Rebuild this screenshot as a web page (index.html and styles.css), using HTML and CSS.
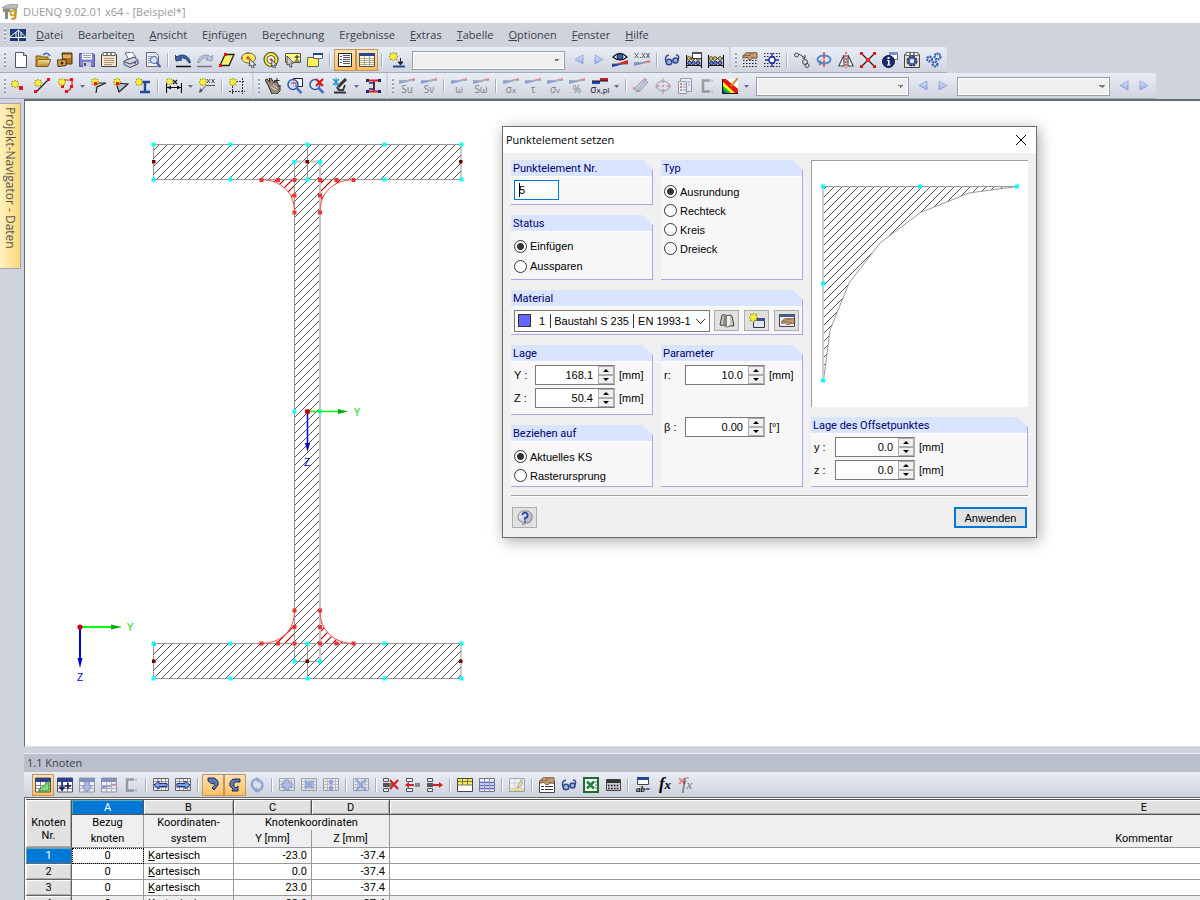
FILE: index.html
```html
<!DOCTYPE html>
<html lang="de">
<head>
<meta charset="utf-8">
<title>DUENQ 9.02.01 x64 - [Beispiel*]</title>
<link rel="stylesheet" href="styles.css">
</head>
<body>
<svg class="defs" aria-hidden="true">
<defs>
<linearGradient id="g-steel" x1="0" y1="0" x2="1" y2="1"><stop offset="0" stop-color="#fff"/><stop offset="1" stop-color="#9aa3b5"/></linearGradient>
<linearGradient id="g-fold" x1="0" y1="0" x2="0" y2="1"><stop offset="0" stop-color="#f8e49a"/><stop offset="1" stop-color="#b58a24"/></linearGradient>
<linearGradient id="g-blue" x1="0" y1="0" x2="0" y2="1"><stop offset="0" stop-color="#dfe8ff"/><stop offset="1" stop-color="#8fabec"/></linearGradient>
<pattern id="hatch" width="8" height="8" patternUnits="userSpaceOnUse"><path d="M-1 9L9-1M-1 1L1-1M7 9L9 7" stroke="#222" stroke-width=".8"/></pattern>
<pattern id="hatch-red" width="8" height="8" patternUnits="userSpaceOnUse"><path d="M-1 9L9-1M-1 1L1-1M7 9L9 7" stroke="#a00" stroke-width="1.200"/></pattern>
<symbol id="star" viewBox="0 0 8 8"><path d="M4 0v8M0 4h8M1 1l6 6M7 1L1 7" stroke="#a89a00" stroke-width="1.4"/><path d="M4 1v6M1 4h6M2 2l4 4M6 2L2 6" stroke="#fff23a" stroke-width="1.3"/></symbol>
<symbol id="wedge" viewBox="0 0 16 6"><path d="M4 3L16 0v3z" fill="#d33"/><path d="M0 3H12L0 6z" fill="#3b5fc8"/><path d="M0 2.500H16" stroke="#777"/></symbol>
<symbol id="hand" viewBox="0 0 16 9"><path d="M0 4L5 0h6l5 1v6l-5 0-2 2-3-1-1-2-5 1z" fill="#c99f72" stroke="#503a28" stroke-width=".8"/><path d="M1 4h8M6 2h6M9 6h4" stroke="#6b4a30" stroke-width=".7"/></symbol>
<symbol id="grid" viewBox="0 0 16 16"><path d="M.5 1h15v14H.5z" fill="#fff" stroke="#555"/><path d="M0 1h16v4H0z" fill="#2b3f8c"/><path d="M1 8.500h14M1 11.500h14M5.500 5v10M10.500 5v10" stroke="#889"/></symbol>
<symbol id="grid-plain" viewBox="0 0 16 16"><path d="M.5 1.500h15v12H.5z" fill="#eee" stroke="#666"/><path d="M1 4.500h14M1 7.500h14M1 10.500h14M4.500 2v11M8.500 2v11M12.500 2v11" stroke="#888" stroke-width=".8"/></symbol>

<symbol id="app" viewBox="0 0 16 16"><path d="M0 4L5 1l10-1 1 3-3 2H7z" fill="#bbb" stroke="#777" stroke-width=".6"/><path d="M1 5h7v3H6v7H3V8H1z" fill="#888"/><path d="M12 5l3-1v5l-3 1z" fill="#999"/><circle cx="11" cy="9" r="2.500" fill="none" stroke="#d8a62c" stroke-width="2"/><path d="M13.500 8v5q0 2-4 2" fill="none" stroke="#c79420" stroke-width="2"/></symbol>
<symbol id="bridge" viewBox="0 0 16 12"><path d="M0 0h16v12H0z" fill="#1c3a78"/><path d="M0 8.500h16M8.500 1v11M8.500 1L0 8M8.500 1l7 7M6 3v5M11 3v5" stroke="#fff" fill="none"/></symbol>
<symbol id="new" viewBox="0 0 16 16"><path d="M2.500.5h8l3 3v12h-11z" fill="#fff" stroke="#555"/><path d="M10.500.5v3h3" fill="#ddd" stroke="#555"/></symbol>
<symbol id="open" viewBox="0 0 16 16"><path d="M1 4h5l1 1h6v9H1z" fill="#c9a13a" stroke="#806010"/><path d="M3 7.500h13l-3 7H1z" fill="url(#g-fold)" stroke="#806010"/><path d="M8 3q4-4 7 1" fill="none" stroke="#3d6fb8" stroke-width="1.600"/></symbol>
<symbol id="archive" viewBox="0 0 16 16"><path d="M5 1h10v11h-9z" fill="#a8732d" stroke="#4c300d"/><path d="M6 3h8v3H6z" fill="#e2b060"/><path d="M.5 8L9 7.500v6L1 14.500z" fill="#e0a34a" stroke="#4c300d"/><circle cx="5" cy="11" r="1.500" fill="#402808"/></symbol>
<symbol id="save" viewBox="0 0 16 16"><path d="M.5 1.500h13l2 1v12H.5z" fill="#7f7fd0" stroke="#54549a"/><path d="M3 1.500h10v6H3z" fill="#fff"/><path d="M4 3.500h8M4 5.500h8" stroke="#99a"/><path d="M4 10h8v5H4z" fill="#ccd"/><path d="M5 11h2v3H5z" fill="#447"/></symbol>
<symbol id="clip" viewBox="0 0 16 16"><path d="M.5 2.500h15v12H.5z" fill="#f6e3c4" stroke="#444"/><path d="M2 .5h4v3H2zM6 .5h4v3H6zM10 .5h4v3h-4z" fill="#fff" stroke="#666"/><path d="M3 6.500h10M3 8.500h10M3 10.500h10M3 12.500h8" stroke="#a98"/></symbol>
<symbol id="print" viewBox="0 0 16 16"><path d="M2 1l7-1 4 5-7 3z" fill="#fff" stroke="#667"/><path d="M1 9l10-4 4 3v4l-8 3.500-6-3z" fill="#ccd1e4" stroke="#445"/><path d="M2 10l5 2 7-3" stroke="#445" fill="none"/><circle cx="12" cy="11" r="1" fill="#3a59b0"/></symbol>
<symbol id="preview" viewBox="0 0 16 16"><path d="M1.500 .5h9l3 3v11h-12z" fill="#eee" stroke="#667"/><path d="M3 4.500h8M3 6.500h4M3 8.500h3M3 10.500h3" stroke="#99a"/><circle cx="9" cy="8" r="3.500" fill="#cfe2fb" stroke="#4a70b8"/><path d="M11.500 10.500l4 4.500" stroke="#3d5fae" stroke-width="2"/></symbol>
<symbol id="undo" viewBox="0 0 16 16"><path d="M0 3l1 6 6-1-2-2q6-1 9 5 2 0 1-2-2-6-8-6-3 0-5 2z" fill="#3762a8" stroke="#142a55" stroke-width=".8"/><path d="M1 14.500h15" stroke="#112" stroke-width="1.500"/></symbol>
<symbol id="redo" viewBox="0 0 16 16"><path d="M16 3l-1 6-6-1 2-2Q5 5 2 11 0 11 1 9 3 3 9 3q3 0 5 2z" fill="#b7c7e0" stroke="#7b8eab" stroke-width=".8"/><path d="M0 14.500h15" stroke="#778" stroke-width="1.500"/></symbol>
<symbol id="para" viewBox="0 0 16 16"><path d="M6 2.500h9L10 13.500H1z" fill="#ffef6a" stroke="#222" stroke-width="1.300"/><path d="M5 1h3v3H5zM0 12h3v3H0z" fill="#e11"/></symbol>
<symbol id="ellsel" viewBox="0 0 16 16"><ellipse cx="7.500" cy="6" rx="7" ry="5" fill="#fff05e" stroke="#665"/><path d="M7 4v4M5 6h4M0 6h2M7 0v2" stroke="#e11"/><path d="M9 7l6 6-3 0 1 3-2 0-1-3-2 1z" fill="#ddd" stroke="#333" stroke-width=".8"/></symbol>
<symbol id="circsel" viewBox="0 0 16 16"><circle cx="8" cy="7.500" r="7" fill="#ffef30" stroke="#554" stroke-width="1.200"/><circle cx="8" cy="7.500" r="4" fill="#fff" stroke="#554"/><path d="M8 6v3M6.500 7.500h3" stroke="#e11"/><path d="M9 8l5 5-2.500 0 1 3-2 0-1-3-1 1z" fill="#ddd" stroke="#333" stroke-width=".8"/></symbol>
<symbol id="rectsel" viewBox="0 0 16 16"><path d="M.5 1.500h15v9H.5z" fill="#fff68a" stroke="#555"/><path d="M12 3v5M9.500 5h5M9.500 9h5" stroke="#222"/><path d="M2 4l7 7-3 0 1 4-2 0-1-3-2 1z" fill="#ccc" stroke="#333" stroke-width=".8"/></symbol>
<symbol id="winsel" viewBox="0 0 16 16"><path d="M.5 5.500h11v9H.5z" fill="#fff05e" stroke="#665"/><path d="M6.500 1.500h9v5h-9z" fill="#fff" stroke="#667"/><path d="M6 1h10v2H6z" fill="#23408f"/></symbol>
<symbol id="panel1" viewBox="0 0 16 16"><path d="M1.500 1.500h13v13h-13z" fill="#fff" stroke="#222"/><path d="M3 4.500h2M3 7.500h2M3 10.500h2M6 3.500h7M6 5.500h7M6 7.500h7M6 9.500h7M6 11.500h7" stroke="#556"/></symbol>
<symbol id="panel2" viewBox="0 0 16 16"><path d="M.5 1.500h15v13H.5z" fill="#fffbe0" stroke="#555"/><path d="M0 1h16v3H0z" fill="#2a4493"/><path d="M1 6.500h14M1 8.500h14M1 10.500h14M1 12.500h14M5.500 4v10M10.500 4v10" stroke="#998" stroke-width=".8"/></symbol>
<symbol id="starload" viewBox="0 0 16 16"><use href="#star" width="9" height="9"/><path d="M11.500 6v6M9 10l2.500 3 2.500-3z" stroke="#223" fill="#223"/><path d="M4 14.500h12" stroke="#27468f" stroke-width="2"/></symbol>
<symbol id="left" viewBox="0 0 16 16"><path d="M12 3v9L4 7.500z" fill="url(#g-blue)" stroke="#7f92cc" stroke-width=".7"/></symbol>
<symbol id="right" viewBox="0 0 16 16"><path d="M4 3v9l8-4.500z" fill="url(#g-blue)" stroke="#7f92cc" stroke-width=".7"/></symbol>
<symbol id="eye" viewBox="0 0 16 16"><path d="M4 12l12-4v4z" fill="#d22"/><path d="M0 12h12L0 15z" fill="#1c2fb8"/><path d="M0 12h16" stroke="#666" stroke-width=".8"/><path d="M1 5q7-7 14 0-7 6-14 0z" fill="#fff" stroke="#111" stroke-width="1.200"/><circle cx="8" cy="4.500" r="3" fill="#2d5ec9" stroke="#111"/></symbol>
<symbol id="xxx" viewBox="0 0 16 16"><path d="M.5 1l4 5M4.500 1l-4 5M8 1l3 5M11 1L8 6M12.500 1l3 5M15.500 1l-3 5" stroke="#555" stroke-width=".9"/><path d="M6 5h1v1H6z" fill="#555"/><g opacity=".6"><use href="#wedge" y="8" width="16" height="6"/></g></symbol>
<symbol id="glasses" viewBox="0 0 16 16"><circle cx="5" cy="10" r="2.800" fill="#9db4e6" stroke="#35488a" stroke-width="1.500"/><circle cx="11.500" cy="8.500" r="2.500" fill="#9db4e6" stroke="#35488a" stroke-width="1.500"/><path d="M2 10Q0 4 5 3M14 8q2-5-2-5" stroke="#35488a" fill="none" stroke-width="1.500"/></symbol>
<symbol id="abacus" viewBox="0 0 16 16"><path d="M.5 3v13M15.500 3v13M0 6.500h16M0 13.500h16" stroke="#111" stroke-width="1.200"/><circle cx="3" cy="6.500" r="1.800" fill="#e8cb4a" stroke="#554"/><circle cx="7" cy="6.500" r="1.800" fill="#e8cb4a" stroke="#554"/><circle cx="12" cy="6.500" r="1.800" fill="#e8cb4a" stroke="#554"/><circle cx="3.500" cy="11" r="1.800" fill="#678be0" stroke="#225"/><circle cx="7.500" cy="11" r="1.800" fill="#678be0" stroke="#225"/><circle cx="12" cy="11" r="1.800" fill="#678be0" stroke="#225"/></symbol>
<symbol id="abacuswin" viewBox="0 0 16 16"><use href="#abacus" width="16" height="16"/><path d="M6.500 .5h9v6h-9z" fill="#fff" stroke="#333"/><path d="M6 0h10v2H6z" fill="#456"/></symbol>
<symbol id="handgrid" viewBox="0 0 16 16"><path d="M1 5.500h15M1 8.500h15M1 11.500h15M1 14.500h15" stroke="#223" stroke-dasharray="1.500 1.500"/><use href="#hand" width="16" height="8"/></symbol>
<symbol id="target" viewBox="0 0 16 16"><path d="M0 1.500h16M0 4.500h16M0 11.500h16M0 14.500h16" stroke="#223" stroke-dasharray="1.500 1.500"/><path d="M8 1v14M1 8h14" stroke="#2437a0" stroke-width="1.500"/><circle cx="8" cy="8" r="3" fill="#fff" stroke="#2437a0" stroke-width="1.500"/></symbol>
<symbol id="chain" viewBox="0 0 16 16"><circle cx="2.500" cy="3" r="2" fill="none" stroke="#444"/><circle cx="13" cy="13.500" r="2" fill="none" stroke="#444"/><circle cx="11" cy="10" r="2.500" fill="none" stroke="#444"/><path d="M5 2l6 4M11 6V3M11 6H8" stroke="#444" fill="none"/></symbol>
<symbol id="rotate" viewBox="0 0 16 16"><ellipse cx="8" cy="7.500" rx="6.500" ry="4" fill="none" stroke="#5b8acb" stroke-width="2"/><path d="M4 8l3 3-4 3z" fill="#4f7fc4"/><path d="M8 0v16" stroke="#e11" stroke-width="1.200" stroke-dasharray="3 1"/></symbol>
<symbol id="mirror" viewBox="0 0 16 16"><path d="M6 3v11H.8zM10 3v11h5.200z" fill="#eef" stroke="#444" stroke-width="1.100"/><path d="M8 0v16" stroke="#e11" stroke-width="1.200" stroke-dasharray="2 1"/></symbol>
<symbol id="xnodes" viewBox="0 0 16 16"><path d="M1 1l14 14M15 1L1 15" stroke="#222" stroke-width="1.300"/><path d="M0 0h3v3H0zM13 0h3v3h-3zM0 13h3v3H0zM13 13h3v3h-3zM6 6h4v4H6z" fill="#e11"/><path d="M7.500 7.500h1v1h-1z" fill="#fff"/></symbol>
<symbol id="info" viewBox="0 0 16 16"><path d="M7.500 .5h8v7h-8z" fill="#fff" stroke="#667"/><path d="M7 0h9v3H7z" fill="#7d8fc6"/><circle cx="6.500" cy="9.500" r="6" fill="#1d2a73" stroke="#0d1440"/><path d="M5.500 5h2v2h-2zM5 8h2.500v4.500H8.500v1H5v-1h1V9H5z" fill="#fff"/></symbol>
<symbol id="gear" viewBox="0 0 16 16"><path d="M.5 2.500h15v13H.5z" fill="#f3dfc0" stroke="#444"/><path d="M2 .5h4v3H2zM6 .5h4v3H6zM10 .5h4v3h-4z" fill="#fff" stroke="#666"/><circle cx="8" cy="9" r="4" fill="none" stroke="#1d397e" stroke-width="3" stroke-dasharray="2.500 .6"/><circle cx="8" cy="9" r="3" fill="#dfe8fa" stroke="#36589e" stroke-width="1.500"/></symbol>
<symbol id="gears" viewBox="0 0 16 16"><g fill="#eaf0ff" stroke="#3e63b4" stroke-width="2.400" stroke-dasharray="1.800 .6"><circle cx="3.500" cy="7" r="2.300"/><circle cx="11.500" cy="4.500" r="2.800"/><circle cx="9" cy="12" r="2.300"/></g></symbol>

<symbol id="node" viewBox="0 0 16 16"><use href="#star" x="1" y="2" width="8" height="8"/><path d="M9 8h4v4H9z" fill="#e11"/></symbol>
<symbol id="line" viewBox="0 0 16 16"><path d="M2 14L14 2" stroke="#222" stroke-width="1.200"/><path d="M0 12h3v3H0zM13 0h3v3h-3z" fill="#e11"/><use href="#star" y="1" width="8" height="8"/></symbol>
<symbol id="poly" viewBox="0 0 16 16"><path d="M6 2h8v6q-2 5-7 6" stroke="#d22" stroke-width="1.200" fill="none"/><path d="M12 0h3v3h-3zM12 7h3v3h-3zM7 12h3v3H7zM3 7h3v3H3z" fill="#e11"/><use href="#star" y="0" width="8" height="8"/></symbol>
<symbol id="seg1" viewBox="0 0 16 16"><path d="M3 5l12 0-9 4-1 6" stroke="#222" fill="#ccd" stroke-width="1.200"/><use href="#star" width="8" height="8"/><path d="M3 4h3v3H3z" fill="#e11"/></symbol>
<symbol id="seg2" viewBox="0 0 16 16"><path d="M3 5l12 1-9 8z" stroke="#222" fill="#bbc" stroke-width="1.200"/><use href="#star" width="8" height="8"/><path d="M3 4h3v3H3z" fill="#e11"/></symbol>
<symbol id="ibeam" viewBox="0 0 16 16"><path d="M5 4h10M5 14h10M10 4v10" stroke="#24479a" stroke-width="2.400"/><use href="#star" width="8" height="8"/></symbol>
<symbol id="dim" viewBox="0 0 16 16"><path d="M.5 5v10M15.500 5v10M1 9.500h14" stroke="#111" stroke-width="1.200"/><path d="M1 9.500l4-2v4zM15 9.500l-4-2v4z" fill="#111"/><path d="M7 2l4 4M11 2L7 6" stroke="#222" stroke-width="1.400"/><use href="#star" width="7" height="7"/></symbol>
<symbol id="note" viewBox="0 0 16 16"><path d="M1 14L7 7.500h9" stroke="#555" fill="none"/><path d="M0 15l1-5 3 3z" fill="#555"/><path d="M8 1l3 4M11 1L8 5M12.500 1l3 4M15.500 1l-3 4" stroke="#555"/><use href="#star" width="8" height="8"/></symbol>
<symbol id="frame" viewBox="0 0 16 16"><path d="M4 3.500h12M0 13.500h16M3.500 2v14M13.500 0v16" stroke="#333" stroke-dasharray="2 1"/><use href="#star" width="8" height="8"/></symbol>
<symbol id="grab" viewBox="0 0 16 16"><path d="M3 7L0 2l2-1 3 3-1-4 2 0 3 5 1-3 3 4 2 3v4l-3 3H7z" fill="#9a8778" stroke="#332a24"/><path d="M12 0v5M9.500 2.500h5M13 8h3" stroke="#222"/><path d="M6 9l5 3M8 7l4 3" stroke="#ddd"/></symbol>
<symbol id="zoomwin" viewBox="0 0 16 16"><path d="M6.500 .5h9v8h-9z" fill="#fff" stroke="#223"/><circle cx="6" cy="6.500" r="5" fill="#cfe2fb" fill-opacity=".8" stroke="#3356a6" stroke-width="1.500"/><path d="M9.500 10l5 5" stroke="#4672c8" stroke-width="2.500"/><path d="M4 5h5v4" stroke="#a33" fill="none"/></symbol>
<symbol id="zoomx" viewBox="0 0 16 16"><circle cx="6" cy="6.500" r="5" fill="#dce9fb" stroke="#3356a6" stroke-width="1.500"/><path d="M9.500 10l5 5" stroke="#4672c8" stroke-width="2.500"/><path d="M7 1l7 7M14 1L7 8" stroke="#d11" stroke-width="2"/></symbol>
<symbol id="micro" viewBox="0 0 16 16"><path d="M14 1L6 9" stroke="#333" stroke-width="3"/><path d="M2 14.500h12M5 9q1 4 6 3l2-5" stroke="#333" stroke-width="1.800" fill="none"/><path d="M1 1l6 6M7 1L1 7M4 0v8" stroke="#2691d8" stroke-width="1.300"/></symbol>
<symbol id="beamred" viewBox="0 0 16 16"><path d="M3 2.500h10M3 13.500h10M9 3v10" stroke="#d22" stroke-width="2"/><path d="M4 5h5v6H4" stroke="#1b2a70" stroke-width="1.500" fill="none"/><path d="M1 1h3v3H1zM13 1h3v3h-3zM1 12h3v3H1zM13 12h3v3h-3z" fill="#1b2a70"/></symbol>
<symbol id="hatching" viewBox="0 0 16 16"><path d="M1 11L10 2l5 2-9 10z" fill="#a9c2e0" stroke="#557"/><path d="M3 14L14 1M1 11l6 2" stroke="#668" fill="none"/><path d="M10 0h3v3h-3zM0 9h3v3H0z" fill="#d55"/></symbol>
<symbol id="ellcross" viewBox="0 0 16 16"><ellipse cx="8" cy="8" rx="6.500" ry="5" fill="none" stroke="#446"/><path d="M8 0v5M8 11v5M0 8h5M11 8h5M8 7v2M7 8h2" stroke="#c33"/></symbol>
<symbol id="report" viewBox="0 0 16 16"><path d="M3.500 .5h11v13h-11z" fill="#eef" stroke="#556"/><path d="M1.500 3.500h8v12h-8z" fill="#fff" stroke="#556"/><path d="M3 6h2M3 9h2" stroke="#c33" stroke-width="2"/><path d="M3 12h2" stroke="#393" stroke-width="2"/><path d="M6 6h3M6 9h3M6 12h3M11 4h2M11 7h2" stroke="#557"/></symbol>
<symbol id="chan" viewBox="0 0 16 16"><path d="M11 2.500H4v11h7" fill="none" stroke="#555" stroke-width="2.400"/><path d="M12 1.500h2v2h-2zM12 12.500h2v2h-2z" fill="#a88"/></symbol>
<symbol id="rainbow" viewBox="0 0 16 16"><path d="M0 1h16v14H0z" fill="#fff"/><path d="M0 1h4l12 10v4H0z" fill="#e11"/><path d="M0 3l13 12H0z" fill="#ff0"/><path d="M0 7l9 8H0z" fill="#1b3"/><path d="M0 11l5 4H0z" fill="#14d"/><path d="M16 0L9 8" stroke="#c9952c" stroke-width="2"/><path d="M.5 1v14.500H16" stroke="#111" fill="none"/></symbol>
<symbol id="sxpl" viewBox="0 0 16 6"><path d="M8 0h8v3H8z" fill="#b22"/><path d="M0 3h8v3H0z" fill="#2346b0"/><path d="M0 3h16" stroke="#111"/></symbol>
<symbol id="caret" viewBox="0 0 8 8"><path d="M2 3h5L4.500 6z" fill="#6a6f7a"/></symbol>

<symbol id="t-edit" viewBox="0 0 16 16"><use href="#grid" width="16" height="16"/><path d="M3 14L14 4v10z" fill="#7ed978" stroke="#2a8d28"/></symbol>
<symbol id="t-ins" viewBox="0 0 16 16"><use href="#grid" width="16" height="16"/><path d="M5 5v7M2.500 9.500L5 13l2.500-3.500M11 6v6M8 9h6" stroke="#14255e" stroke-width="1.600" fill="none"/></symbol>
<symbol id="t-down" viewBox="0 0 16 16"><use href="#grid" width="16" height="16"/><path d="M6 5h4v4h3l-5 6-5-6h3z" fill="#7d99e0" stroke="#3455a8"/></symbol>
<symbol id="t-wedge" viewBox="0 0 16 16"><use href="#grid" width="16" height="16"/><use href="#wedge" y="6" width="16" height="6"/></symbol>
<symbol id="t-left" viewBox="0 0 16 16"><use href="#grid-plain" width="16" height="16"/><path d="M1 8l5-4v2.500h8v3H6V12z" fill="#7f9eea" stroke="#1d3580"/></symbol>
<symbol id="t-right" viewBox="0 0 16 16"><use href="#grid-plain" width="16" height="16"/><path d="M15 8l-5-4v2.500H2v3h8V12z" fill="#7f9eea" stroke="#1d3580"/></symbol>
<symbol id="t-hook1" viewBox="0 0 16 16"><path d="M3 1h6q5 2 4 7l-4 5-2-2q4-3 2-5L7 7 3 4z" fill="#5978b8" stroke="#222b48"/></symbol>
<symbol id="t-hook2" viewBox="0 0 16 16"><path d="M13 2H7Q2 3 3 9l3 3-1 2h6l0-5-2 2q-4-3-1-6h5z" fill="#5978b8" stroke="#222b48"/></symbol>
<symbol id="t-sync" viewBox="0 0 16 16"><path d="M8 2q-6 1-5 7l3 4M8 14q7-2 5-8L10 3" stroke="#4e6eb8" stroke-width="2.500" fill="none"/><path d="M7 0l4 2-3 4zM9 16l-4-2 3-4z" fill="#4e6eb8"/></symbol>
<symbol id="t-plus" viewBox="0 0 16 16"><use href="#grid-plain" width="16" height="16"/><path d="M6 3h4v3h3v4h-3v3H6v-3H3V6h3z" fill="#7f9eea" stroke="#3452ab"/></symbol>
<symbol id="t-mul" viewBox="0 0 16 16"><use href="#grid-plain" width="16" height="16"/><path d="M4 4l8 7M12 4l-8 7" stroke="#4f70d5" stroke-width="3.500"/></symbol>
<symbol id="t-div" viewBox="0 0 16 16"><use href="#grid-plain" width="16" height="16"/><circle cx="8" cy="5" r="2.200" fill="#3f60c5"/><circle cx="8" cy="11" r="2.200" fill="#3f60c5"/></symbol>
<symbol id="t-x" viewBox="0 0 16 16"><use href="#grid-plain" width="16" height="16"/><path d="M3 2l10 12M13 2L3 14" stroke="#456bd0" stroke-width="2.200"/></symbol>
<symbol id="rows" viewBox="0 0 6 16"><path d="M.5 1.500h5v3h-5zM.5 11.500h5v3h-5z" fill="#eee" stroke="#555"/><path d="M0 6h6v4H0z" fill="#555"/></symbol>
<symbol id="r-del" viewBox="0 0 16 16"><use href="#rows" width="6" height="16"/><path d="M6 6h4v4H6z" fill="#777"/><path d="M7 3l8 9M15 3L7 12" stroke="#c22" stroke-width="2"/></symbol>
<symbol id="r-left" viewBox="0 0 16 16"><path d="M1.500 1.500h6v3h-6zM1.500 11.500h6v3h-6z" fill="#eee" stroke="#555"/><path d="M10 6h5v4h-5z" fill="#888"/><path d="M0 8l4-3v2h5v2H4v2z" fill="#c22"/></symbol>
<symbol id="r-right" viewBox="0 0 16 16"><use href="#rows" width="6" height="16"/><path d="M16 8l-4-3v2H6v2h6v2z" fill="#c22"/></symbol>
<symbol id="g-yel" viewBox="0 0 16 16"><path d="M.5 1.500h15v13H.5z" fill="#fff" stroke="#444"/><path d="M1 2h14v6H1z" fill="#f2ec55"/><path d="M1 4.500h14M1 8h14M5.500 2v6M10.500 2v6" stroke="#775"/></symbol>
<symbol id="g-lines" viewBox="0 0 16 16"><path d="M.5 1.500h15v13H.5z" fill="#eef" stroke="#778"/><path d="M1 5.500h14M1 8.500h14M1 11.500h14" stroke="#5b68c8" stroke-width="1.600"/><path d="M5.500 2v12M10.500 2v12" stroke="#99a"/></symbol>
<symbol id="g-paint" viewBox="0 0 16 16"><path d="M.5 1.500h15v13H.5z" fill="#fff" stroke="#667"/><path d="M1 11h14v3H1z" fill="#f3e34c"/><path d="M1 6h14M6 2v12" stroke="#bbb"/><path d="M13 1v6q-1 4-5 4l2-4z" fill="#f0e050" stroke="#776"/></symbol>
<symbol id="handlist" viewBox="0 0 16 16"><path d="M.5 4.500h15v11H.5z" fill="#fff" stroke="#444"/><path d="M2 9.500h3M2 12.500h3M6 9.500h8M6 12.500h8" stroke="#333"/><use href="#hand" width="16" height="8"/></symbol>
<symbol id="excel" viewBox="0 0 16 16"><path d="M1 1h14v14H1z" fill="#fff" stroke="#1f6b2d" stroke-width="2"/><path d="M4 4.500l7 7M11 4.500l-7 7" stroke="#24803a" stroke-width="2.600"/><path d="M12 5h2M12 8h2M12 11h2" stroke="#24803a"/></symbol>
<symbol id="calc" viewBox="0 0 16 16"><path d="M1.500 2.500h14v11h-14z" fill="#ccc" stroke="#444"/><path d="M2 3h13v3H2z" fill="#333"/><path d="M3 8.500h11M3 11.500h11" stroke="#223" stroke-width="1.600" stroke-dasharray="1.700 1.200"/></symbol>
<symbol id="miniwin" viewBox="0 0 12 8"><path d="M.5 .5h11v7H.5z" fill="#fff" stroke="#444"/><path d="M0 0h12v3H0z" fill="#24469c"/></symbol>
<symbol id="redx" viewBox="0 0 8 8"><path d="M1 1l6 6M7 1L1 7" stroke="#d33" stroke-width="2"/></symbol>
<symbol id="book" viewBox="0 0 16 16"><path d="M1 12L3 2q3-1 5 1 2-2 5 0l2 10q-4-1-7 1-3-2-7-2z" fill="#c9c7be" stroke="#444"/><path d="M8 3v11l-4-2L5 3z" fill="#8a887c"/><path d="M8 3l3 0v9l-3 2z" fill="#f2f1ea"/></symbol>
<symbol id="newmat" viewBox="0 0 16 16"><path d="M4.500 5.500h11v9h-11z" fill="#dfe4f2" stroke="#334"/><path d="M4 5h12v3H4z" fill="#3c5288"/><use href="#star" y="0" width="9" height="9"/></symbol>
<symbol id="editmat" viewBox="0 0 16 16"><path d="M.5 1.500h15v12H.5z" fill="#eee" stroke="#445"/><path d="M0 1h16v3H0z" fill="#4a5a80"/><use href="#hand" x="2" y="5" width="14" height="7"/></symbol>
<symbol id="help" viewBox="0 0 18 18"><path d="M9 1q8 0 8 7t-8 7l-2 2-1-3Q1 12 1 8 2 1 9 1z" fill="url(#g-steel)" stroke="#777"/><path d="M6 6q0-3 3-3t3 3-3 3v2" fill="none" stroke="#24469c" stroke-width="2"/><path d="M8 12h2v2H8z" fill="#24469c"/></symbol>
</defs>
</svg>

<div class="app">
  <header class="titlebar"><svg class="ic"><use href="#app"/></svg><span>DUENQ 9.02.01 x64 - [Beispiel*]</span></header>
  <nav class="menubar">
    <i class="grip"></i><svg class="ic bridge"><use href="#bridge"/></svg>
    <a href="#"><u>D</u>atei</a><a href="#">Bearbeite<u>n</u></a><a href="#"><u>A</u>nsicht</a><a href="#">E<u>i</u>nfügen</a><a href="#">Be<u>r</u>echnung</a><a href="#">Er<u>g</u>ebnisse</a><a href="#"><u>E</u>xtras</a><a href="#"><u>T</u>abelle</a><a href="#"><u>O</u>ptionen</a><a href="#"><u>F</u>enster</a><a href="#"><u>H</u>ilfe</a>
  </nav>

  <div class="toolrow">
    <div class="band first"><i class="grip"></i>
      <button class="tb" aria-label="Neu"><svg class="ic"><use href="#new"/></svg></button>
      <button class="tb" aria-label="Öffnen"><svg class="ic"><use href="#open"/></svg></button>
      <button class="tb" aria-label="Projekte"><svg class="ic"><use href="#archive"/></svg></button>
      <button class="tb" aria-label="Speichern"><svg class="ic"><use href="#save"/></svg></button>
      <button class="tb" aria-label="Basisangaben"><svg class="ic"><use href="#clip"/></svg></button>
      <button class="tb" aria-label="Drucken"><svg class="ic"><use href="#print"/></svg></button>
      <button class="tb" aria-label="Druckvorschau"><svg class="ic"><use href="#preview"/></svg></button>
      <i class="sep"></i>
      <button class="tb" aria-label="Rückgängig"><svg class="ic"><use href="#undo"/></svg></button>
      <button class="tb" aria-label="Wiederholen"><svg class="ic"><use href="#redo"/></svg></button>
      <button class="tb" aria-label="Auswahl Rhomboid"><svg class="ic"><use href="#para"/></svg></button>
      <button class="tb" aria-label="Auswahl Ellipse"><svg class="ic"><use href="#ellsel"/></svg></button>
      <button class="tb" aria-label="Auswahl Ring"><svg class="ic"><use href="#circsel"/></svg></button>
      <button class="tb" aria-label="Auswahl Rechteck"><svg class="ic"><use href="#rectsel"/></svg></button>
      <button class="tb" aria-label="Auswahl speziell"><svg class="ic"><use href="#winsel"/></svg></button>
      <i class="sep"></i>
      <button class="tb on" aria-label="Navigator"><svg class="ic"><use href="#panel1"/></svg></button>
      <button class="tb on" aria-label="Tabellen"><svg class="ic"><use href="#panel2"/></svg></button>
      <i class="sep"></i>
      <button class="tb" aria-label="Lastfall"><svg class="ic"><use href="#starload"/></svg></button>
      <select class="combo" aria-label="Lastfall wählen"></select>
      <button class="tb arrow" aria-label="Vorheriger"><svg class="ic"><use href="#left"/></svg></button>
      <button class="tb arrow" aria-label="Nächster"><svg class="ic"><use href="#right"/></svg></button>
      <button class="tb" aria-label="Ergebnisse ein/aus"><svg class="ic"><use href="#eye"/></svg></button>
      <button class="tb" aria-label="Ergebniswerte"><svg class="ic"><use href="#xxx"/></svg></button>
      <i class="sep"></i>
      <button class="tb" aria-label="Ansicht"><svg class="ic"><use href="#glasses"/></svg></button>
      <button class="tb" aria-label="Berechnung"><svg class="ic"><use href="#abacuswin"/></svg></button>
      <button class="tb" aria-label="Alles berechnen"><svg class="ic"><use href="#abacus"/></svg></button>
    </div>
    <div class="band"><i class="grip"></i>
      <button class="tb" aria-label="Raster bearbeiten"><svg class="ic"><use href="#handgrid"/></svg></button>
      <button class="tb" aria-label="Objektfang"><svg class="ic"><use href="#target"/></svg></button>
      <i class="sep"></i>
      <button class="tb" aria-label="Kopieren"><svg class="ic"><use href="#chain"/></svg></button>
      <button class="tb" aria-label="Rotieren"><svg class="ic"><use href="#rotate"/></svg></button>
      <button class="tb" aria-label="Spiegeln"><svg class="ic"><use href="#mirror"/></svg></button>
      <button class="tb" aria-label="Linien verbinden"><svg class="ic"><use href="#xnodes"/></svg></button>
      <button class="tb" aria-label="Info"><svg class="ic"><use href="#info"/></svg></button>
      <button class="tb" aria-label="Einstellungen"><svg class="ic"><use href="#gear"/></svg></button>
      <button class="tb" aria-label="Optionen"><svg class="ic"><use href="#gears"/></svg></button>
    </div>
  </div>

  <div class="toolrow">
    <div class="band tight"><i class="grip"></i>
      <button class="tb wide" aria-label="Knoten"><svg class="ic"><use href="#node"/></svg></button>
      <button class="tb wide" aria-label="Linie"><svg class="ic"><use href="#line"/></svg></button>
      <button class="tb wide" aria-label="Polylinie"><svg class="ic"><use href="#poly"/></svg></button><button class="dd" aria-label="Mehr"><svg><use href="#caret"/></svg></button>
      <button class="tb" aria-label="Element"><svg class="ic"><use href="#seg1"/></svg></button>
      <button class="tb" aria-label="Punktelement"><svg class="ic"><use href="#seg2"/></svg></button>
      <button class="tb" aria-label="Profil"><svg class="ic"><use href="#ibeam"/></svg></button>
      <i class="sep"></i>
      <button class="tb wide" aria-label="Bemaßung"><svg class="ic"><use href="#dim"/></svg></button><button class="dd" aria-label="Mehr"><svg><use href="#caret"/></svg></button>
      <button class="tb" aria-label="Kommentar"><svg class="ic"><use href="#note"/></svg></button>
      <i class="sep"></i>
      <button class="tb" aria-label="Hilfslinien"><svg class="ic"><use href="#frame"/></svg></button>
    </div>
    <div class="band"><i class="grip"></i>
      <button class="tb" aria-label="Verschieben"><svg class="ic"><use href="#grab"/></svg></button>
      <button class="tb" aria-label="Fenster zoomen"><svg class="ic"><use href="#zoomwin"/></svg></button>
      <button class="tb" aria-label="Alles zeigen"><svg class="ic"><use href="#zoomx"/></svg></button>
      <button class="tb wide" aria-label="Ansicht"><svg class="ic"><use href="#micro"/></svg></button><button class="dd" aria-label="Mehr"><svg><use href="#caret"/></svg></button>
      <button class="tb" aria-label="Querschnitt"><svg class="ic"><use href="#beamred"/></svg></button>
    </div>
    <div class="band"><i class="grip"></i>
      <button class="tb off sym"><svg><use href="#wedge"/></svg><span>Su</span></button>
      <button class="tb off sym"><svg><use href="#wedge"/></svg><span>Sv</span></button>
      <i class="sep"></i>
      <button class="tb off sym"><svg><use href="#wedge"/></svg><span>ω</span></button>
      <button class="tb off sym"><svg><use href="#wedge"/></svg><span>Sω</span></button>
      <i class="sep"></i>
      <button class="tb off sym"><svg><use href="#wedge"/></svg><span>σ<small>x</small></span></button>
      <button class="tb off sym"><svg><use href="#wedge"/></svg><span>τ</span></button>
      <button class="tb off sym"><svg><use href="#wedge"/></svg><span>σ<small>v</small></span></button>
      <button class="tb off sym"><svg><use href="#wedge"/></svg><span>%</span></button>
      <button class="tb wide sym"><svg><use href="#sxpl"/></svg><span>σ<small>x,pl</small></span></button><button class="dd" aria-label="Mehr"><svg><use href="#caret"/></svg></button>
      <i class="sep"></i>
      <button class="tb off" aria-label="Schraffur"><svg class="ic"><use href="#hatching"/></svg></button>
      <button class="tb off" aria-label="Kern"><svg class="ic"><use href="#ellcross"/></svg></button>
      <button class="tb off" aria-label="Protokoll"><svg class="ic"><use href="#report"/></svg></button>
      <button class="tb off" aria-label="Profil"><svg class="ic"><use href="#chan"/></svg></button>
      <button class="tb wide" aria-label="Farben"><svg class="ic"><use href="#rainbow"/></svg></button><button class="dd" aria-label="Mehr"><svg><use href="#caret"/></svg></button>
      <select class="combo" aria-label="Spannung"></select>
      <button class="tb arrow" aria-label="Vorheriger"><svg class="ic"><use href="#left"/></svg></button>
      <button class="tb arrow" aria-label="Nächster"><svg class="ic"><use href="#right"/></svg></button>
      <select class="combo" aria-label="Verlauf"></select>
      <button class="tb arrow" aria-label="Vorheriger"><svg class="ic"><use href="#left"/></svg></button>
      <button class="tb arrow" aria-label="Nächster"><svg class="ic"><use href="#right"/></svg></button>
    </div>
  </div>

  <div class="workspace">
    <aside class="rail"><button class="navtab">Projekt-Navigator - Daten</button></aside>
    <div class="content">
      <main class="canvas">
        <svg class="drawing" width="1175" height="645" viewBox="25 101 1175 645" role="img" aria-label="Querschnitt">
          <path d="M153 144.500H461V180H153zM153 643.500H461V678.500H153zM294.500 180H320V643.500H294.500z" fill="url(#hatch)"/>
          <path d="M261 180C281 180 294.500 192 294.500 212.500V180zM353.500 180C334 180 320 192 320 212.500V180zM261 643.500C281 643 294.500 631 294.500 610V643.500zM353.500 643.500C334 643 320 631 320 610V643.500z" fill="url(#hatch-red)"/>
          <g fill="none" stroke="#999"><path d="M153.500 144.500H461V179.500H153.500zM153.500 643.500H461V678.500H153.500zM307.500 144v35M307.500 643v35M294.500 161.500V661.500M294.500 661.500H320"/><path d="M294.500 161.500H320V661.500" stroke="#c4c4c4" stroke-width="2"/></g>
          <path d="M261 179.500C281 180 294.500 192 294.500 212.500M353.500 179.500C334 180 320 192 320 212.500M261 643.500C281 643 294.500 631 294.500 610.500M353.500 643.500C334 643 320 631 320 610.500" fill="none" stroke="#ff4a4a"/>
          <path d="M151.500 142.500h4v4h-4zm77 0h4v4h-4zm77 0h4v4h-4zm77 0h4v4h-4zm77 0h4v4h-4zM151.500 177.500h4v4h-4zm77 0h4v4h-4zm77 0h4v4h-4zm77 0h4v4h-4zm77 0h4v4h-4zM151.500 641.500h4v4h-4zm77 0h4v4h-4zm77 0h4v4h-4zm77 0h4v4h-4zm77 0h4v4h-4zM151.500 676.500h4v4h-4zm77 0h4v4h-4zm77 0h4v4h-4zm77 0h4v4h-4zm77 0h4v4h-4zM292.500 160h4v4h-4zm25.500 0h4v4h-4zM292.500 659.500h4v4h-4zm25.500 0h4v4h-4zM292.500 409.500h4v4h-4zm25.500 0h4v4h-4z" fill="#1ff"/>
          <path d="M259.500 178h4v4h-4zm16.500 0h4v4h-4zm16.500 0h4v4h-4zm25.500 0h4v4h-4zm16.500 0h4v4h-4zm17 0h4v4h-4zM292.500 193.500h4v4h-4zm25.500 0h4v4h-4zM292.500 210.500h4v4h-4zm25.500 0h4v4h-4zM259.500 641.500h4v4h-4zm16.500 0h4v4h-4zm16.500 0h4v4h-4zm25.500 0h4v4h-4zm16.500 0h4v4h-4zm17 0h4v4h-4zM292.500 625h4v4h-4zm25.500 0h4v4h-4zM292.500 608.500h4v4h-4zm25.500 0h4v4h-4z" fill="#e33"/>
          <path d="M152 160h3.500v3.500H152zM305.500 160h3.500v3.500h-3.500zM459 160h3.500v3.500H459zM152 659.500h3.500v3.500H152zM305.500 659.500h3.500v3.500h-3.500zM459 659.500h3.500v3.500H459z" fill="#700"/>
          <path d="M307 411.500h33" stroke="#0f0" stroke-width="1.500"/><path d="M338 409l10 2.500-10 2.500z" fill="#0a0"/><path d="M307.500 412v32" stroke="#00e" stroke-width="1.500"/><path d="M305 443h5l-2.500 9z" fill="#00c"/><circle cx="307.500" cy="411.500" r="2.600" fill="#c00"/>
          <path d="M80 627h33" stroke="#0f0" stroke-width="2"/><path d="M111 624.500l11 2.500-11 2.500z" fill="#0a0"/><path d="M80 627v32" stroke="#00e" stroke-width="2"/><path d="M77.500 658h5l-2.500 10z" fill="#00c"/><circle cx="80" cy="627" r="2.600" fill="#c00"/>
          <g class="axis"><text x="357" y="416" class="y">Y</text><text x="307" y="466">Z</text><text x="130" y="631" class="y">Y</text><text x="80" y="681">Z</text></g>
        </svg>
      </main>

      <section class="panel">
        <h2>1.1 Knoten</h2>
        <div class="panelbar">
          <button class="tb on" aria-label="Bearbeiten"><svg class="ic"><use href="#t-edit"/></svg></button>
          <button class="tb" aria-label="Zeile einfügen"><svg class="ic"><use href="#t-ins"/></svg></button>
          <button class="tb off" aria-label="Nach unten"><svg class="ic"><use href="#t-down"/></svg></button>
          <button class="tb off" aria-label="Ergebnisse"><svg class="ic"><use href="#t-wedge"/></svg></button>
          <button class="tb off" aria-label="Profil"><svg class="ic"><use href="#chan"/></svg></button>
          <i class="sep"></i>
          <button class="tb" aria-label="Vorherige Tabelle"><svg class="ic"><use href="#t-left"/></svg></button>
          <button class="tb" aria-label="Nächste Tabelle"><svg class="ic"><use href="#t-right"/></svg></button>
          <i class="sep"></i>
          <button class="tb on" aria-label="Grafik zu Tabelle"><svg class="ic"><use href="#t-hook1"/></svg></button>
          <button class="tb on" aria-label="Tabelle zu Grafik"><svg class="ic"><use href="#t-hook2"/></svg></button>
          <button class="tb off" aria-label="Aktualisieren"><svg class="ic"><use href="#t-sync"/></svg></button>
          <i class="sep"></i>
          <button class="tb off" aria-label="Addieren"><svg class="ic"><use href="#t-plus"/></svg></button>
          <button class="tb off" aria-label="Multiplizieren"><svg class="ic"><use href="#t-mul"/></svg></button>
          <button class="tb off" aria-label="Dividieren"><svg class="ic"><use href="#t-div"/></svg></button>
          <i class="sep"></i>
          <button class="tb off" aria-label="Leeren"><svg class="ic"><use href="#t-x"/></svg></button>
          <i class="sep"></i>
          <button class="tb" aria-label="Zeile löschen"><svg class="ic"><use href="#r-del"/></svg></button>
          <button class="tb" aria-label="Zeile links"><svg class="ic"><use href="#r-left"/></svg></button>
          <button class="tb" aria-label="Zeile rechts"><svg class="ic"><use href="#r-right"/></svg></button>
          <i class="sep"></i>
          <button class="tb" aria-label="Kopfzeile"><svg class="ic"><use href="#g-yel"/></svg></button>
          <button class="tb" aria-label="Zeilen"><svg class="ic"><use href="#g-lines"/></svg></button>
          <i class="sep"></i>
          <button class="tb off" aria-label="Färben"><svg class="ic"><use href="#g-paint"/></svg></button>
          <i class="sep"></i>
          <button class="tb" aria-label="Eigenschaften"><svg class="ic"><use href="#handlist"/></svg></button>
          <button class="tb" aria-label="Ansicht"><svg class="ic"><use href="#glasses"/></svg></button>
          <button class="tb" aria-label="Excel"><svg class="ic"><use href="#excel"/></svg></button>
          <button class="tb" aria-label="Rechner"><svg class="ic"><use href="#calc"/></svg></button>
          <i class="sep"></i>
          <button class="tb formula"><svg><use href="#miniwin"/></svg><span>ab=</span></button>
          <button class="tb fx"><i>f<small>x</small></i></button>
          <button class="tb fx thin off"><svg><use href="#redx"/></svg><i>f<small>x</small></i></button>
        </div>
        <div class="gridwin">
          <table class="grid">
            <colgroup><col class="c-no"><col class="c-a"><col class="c-b"><col class="c-c"><col class="c-c"><col></colgroup>
            <thead>
              <tr class="letters"><th rowspan="3" class="corner">Knoten<br>Nr.</th><th class="sel">A</th><th>B</th><th>C</th><th>D</th><th>E</th></tr>
              <tr class="h1"><th>Bezug</th><th>Koordinaten-</th><th colspan="2">Knotenkoordinaten</th><th></th></tr>
              <tr class="h2"><th>knoten</th><th>system</th><th>Y [mm]</th><th>Z [mm]</th><th>Kommentar</th></tr>
            </thead>
            <tbody>
              <tr><th class="sel">1</th><td class="mid focus">0</td><td><u>K</u>artesisch</td><td class="num">-23.0</td><td class="num">-37.4</td><td></td></tr>
              <tr><th>2</th><td class="mid">0</td><td><u>K</u>artesisch</td><td class="num">0.0</td><td class="num">-37.4</td><td></td></tr>
              <tr><th>3</th><td class="mid">0</td><td><u>K</u>artesisch</td><td class="num">23.0</td><td class="num">-37.4</td><td></td></tr>
              <tr class="alt"><th>4</th><td class="mid">0</td><td><u>K</u>artesisch</td><td class="num">-23.0</td><td class="num">37.4</td><td></td></tr>
            </tbody>
          </table>
        </div>
      </section>
    </div>
  </div>
</div>

<form class="dialog" role="dialog" aria-labelledby="dlg-title">
  <div class="dlg-head"><span id="dlg-title">Punktelement setzen</span><button type="button" class="close" aria-label="Schließen"><svg viewBox="0 0 10 10"><path d="M0 0l10 10M10 0L0 10" stroke="#000" fill="none"/></svg></button></div>
  <div class="dlg-body">
    <div class="cols">
      <div class="main">
        <div class="pair">
          <div class="stack">
            <fieldset class="box h45"><h3><label for="nr">Punktelement Nr.</label></h3><div class="in"><input id="nr" class="nr" value="5"><i class="cursor"></i></div></fieldset>
            <fieldset class="box h65"><h3>Status</h3><div class="in radios tall"><label><input type="radio" name="st" checked>Einfügen</label><label><input type="radio" name="st">Aussparen</label></div></fieldset>
          </div>
          <fieldset class="box"><h3>Typ</h3><div class="in radios"><label><input type="radio" name="ty" checked>Ausrundung</label><label><input type="radio" name="ty">Rechteck</label><label><input type="radio" name="ty">Kreis</label><label><input type="radio" name="ty">Dreieck</label></div></fieldset>
        </div>
        <fieldset class="box h45"><h3><label for="mat">Material</label></h3><div class="in material">
          <div class="matsel"><select id="mat"><option>1&nbsp;&nbsp;&nbsp;Baustahl S 235&nbsp;&nbsp;&nbsp;EN 1993-1-</option></select><i class="swatch"></i></div>
          <button type="button" class="mb" aria-label="Bibliothek"><svg class="ic"><use href="#book"/></svg></button>
          <button type="button" class="mb" aria-label="Neues Material"><svg class="ic"><use href="#newmat"/></svg></button>
          <button type="button" class="mb" aria-label="Material bearbeiten"><svg class="ic"><use href="#editmat"/></svg></button>
        </div></fieldset>
        <div class="pair">
          <div class="stack">
            <fieldset class="box h70"><h3>Lage</h3><div class="in fields">
              <div class="field"><label for="fy">Y :</label><span class="spin"><input id="fy" value="168.1"><button type="button" class="up" aria-label="Mehr"></button><button type="button" class="down" aria-label="Weniger"></button></span><span>[mm]</span></div>
              <div class="field"><label for="fz">Z :</label><span class="spin"><input id="fz" value="50.4"><button type="button" class="up" aria-label="Mehr"></button><button type="button" class="down" aria-label="Weniger"></button></span><span>[mm]</span></div>
            </div></fieldset>
            <fieldset class="box h62"><h3>Beziehen auf</h3><div class="in radios"><label><input type="radio" name="bz" checked>Aktuelles KS</label><label><input type="radio" name="bz">Rasterursprung</label></div></fieldset>
          </div>
          <fieldset class="box"><h3>Parameter</h3><div class="in fields params">
            <div class="field"><label for="fr">r:</label><span class="spin"><input id="fr" value="10.0"><button type="button" class="up" aria-label="Mehr"></button><button type="button" class="down" aria-label="Weniger"></button></span><span>[mm]</span></div>
            <div class="field"><label for="fb">β :</label><span class="spin"><input id="fb" value="0.00"><button type="button" class="up" aria-label="Mehr"></button><button type="button" class="down" aria-label="Weniger"></button></span><span>[°]</span></div>
          </div></fieldset>
        </div>
      </div>
      <div class="side">
        <div class="preview"><svg viewBox="0 0 216 246" role="img" aria-label="Vorschau">
          <path d="M11.500 25.500H205L157 32 108.500 51.500 68 82 37 122 18 169 11.500 219.500z" fill="url(#hatch)"/>
          <path d="M11.500 25.500H205M205 25.500L157 32 108.500 51.500 68 82 37 122 18 169 11.500 219.500" fill="none" stroke="#999"/><path d="M11 25v195" stroke="#ccc" stroke-width="2"/>
          <path d="M9 23.500h4v4H9zM106 23.500h4v4h-4zM203 23.500h4v4h-4zM9 120.500h4v4H9zM9 217.500h4v4H9z" fill="#0ff"/>
        </svg></div>
        <fieldset class="box h70"><h3>Lage des Offsetpunktes</h3><div class="in fields">
          <div class="field"><label for="oy">y :</label><span class="spin"><input id="oy" value="0.0"><button type="button" class="up" aria-label="Mehr"></button><button type="button" class="down" aria-label="Weniger"></button></span><span>[mm]</span></div>
          <div class="field"><label for="oz">z :</label><span class="spin"><input id="oz" value="0.0"><button type="button" class="up" aria-label="Mehr"></button><button type="button" class="down" aria-label="Weniger"></button></span><span>[mm]</span></div>
        </div></fieldset>
      </div>
    </div>
    <div class="actions"><button type="button" class="mb" aria-label="Hilfe"><svg class="ic"><use href="#help"/></svg></button><button type="button" class="apply">Anwenden</button></div>
  </div>
</form>
</body>
</html>
```
FILE: styles.css
```css
* { box-sizing: border-box; }
body { margin: 0; overflow: hidden; font: 11px/16px "Open Sans", "Noto Sans", sans-serif; color: #000; }
button, input, select { font: inherit; color: inherit; margin: 0; padding: 0; border: 0; background: none; }
h2, h3, fieldset { margin: 0; padding: 0; border: 0; font-weight: normal; }
fieldset { min-width: 0; }
.defs { position: absolute; width: 0; height: 0; }
.ic { display: block; width: 16px; height: 16px; flex: none; }

.app { height: 100vh; display: flex; flex-direction: column; background: #ced3dc; }
.titlebar { height: 23px; flex: none; background: #fff; color: #999; display: flex; align-items: center; gap: 5px; padding-left: 2px; }
.menubar { height: 24px; flex: none; display: flex; align-items: center; gap: 15px; padding-left: 10px; position: relative; color: #3b3f4a; }
.menubar .bridge { height: 12px; margin-right: -5px; }
.menubar a { color: inherit; text-decoration: none; }
.grip { position: absolute; left: 4px; top: 5px; bottom: 5px; width: 2px; background: repeating-linear-gradient(#fff 0 1px, #9ca1ad 1px 3px, transparent 3px 4px); }

.toolrow { height: 26px; flex: none; display: flex; gap: 2px; }
.band { position: relative; display: flex; align-items: center; height: 26px; padding: 1px 2px 0 8px; background: linear-gradient(#e9edf6, #cfd4de); border-bottom: 1px solid #a6aab8; border-radius: 0 3px 0 0; }
.band.first { padding-left: 10px; }
.band.tight { padding-left: 6px; padding-right: 4px; }
.tb { width: 22px; height: 22px; flex: none; display: flex; align-items: center; justify-content: center; border: 1px solid transparent; }
.wide { width: 24px; }
.arrow { width: 20px; }
.on { border-color: #c2955a; background: linear-gradient(#ffe3b5, #ffbf62); }
.off > * { opacity: .5; }
.sep { width: 8px; height: 14px; flex: none; background: linear-gradient(90deg, transparent 3px, #a9aebb 3px 4px, #fff 4px 5px, transparent 5px); }
.dd { width: 10px; height: 22px; flex: none; }
.dd svg { width: 8px; height: 8px; display: block; }
.combo { width: 153px; height: 19px; margin: 0 4px; flex: none; appearance: none; border: 1px solid #999da6; background: conic-gradient(from -45deg at 50% 100%, #777 90deg, transparent 90deg) right 4px top 7px / 6px 3px no-repeat, #efefef; background: linear-gradient(45deg, transparent 50%, #777 50%) right 7px top 7px / 3px 3px no-repeat, linear-gradient(-45deg, transparent 50%, #777 50%) right 4px top 7px / 3px 3px no-repeat, #efefef; box-shadow: inset 0 0 0 1px #fff; }
.sym { flex-direction: column; justify-content: flex-start; padding-top: 2px; color: #222; font-size: 10px; line-height: 11px; }
.sym svg { width: 16px; height: 6px; flex: none; }
.sym small { font-size: 8px; }

.workspace { flex: 1; min-height: 0; display: flex; }
.rail { width: 24px; flex: none; padding-top: 4px; }
.navtab { width: 21px; height: 166px; padding: 3px 1px; writing-mode: vertical-rl; text-align: left; font-size: 12px; line-height: 17px; color: #555; background: linear-gradient(90deg, #fff1bf, #ffd977); border: 1px solid #a3a6b8; border-left: 0; }
.content { flex: 1; min-width: 0; display: flex; flex-direction: column; }
.canvas { flex: 1; min-height: 0; overflow: hidden; background: #fff; border: solid #6b6b6b; border-width: 2px 0 0 1px; border-bottom: 1px solid #ddd; }
.drawing { display: block; }
.axis { font: 10px "Liberation Sans", sans-serif; fill: #00c; text-anchor: middle; }
.axis .y { fill: #0d0; }

.panel { flex: none; margin-top: 6px; }
.panel h2 { height: 19px; padding-left: 3px; background: #b9c0cb; border-top: 1px solid #e6eaf2; color: #3b3f4a; font-size: 11px; line-height: 17px; }
.panelbar { display: flex; align-items: center; height: 25px; padding-left: 8px; background: linear-gradient(#e9edf6, #cdd2dc); }
.formula { flex-direction: column; font: italic bold 9px/8px "Liberation Serif", serif; }
.formula svg { width: 12px; height: 8px; flex: none; }
.fx { position: relative; font: bold 17px/18px "Liberation Serif", serif; }
.fx.thin { font-weight: normal; }
.fx small { font-size: 13px; }
.fx svg { position: absolute; left: 1px; top: 2px; width: 8px; height: 8px; }

.gridwin { height: 103px; overflow: hidden; background: #fff; border: solid #666; border-width: 1px 0 0 1px; padding: 1px 0 0 1px; font: 11px/15px Roboto, "Liberation Sans", sans-serif; }
.grid { width: 1873px; table-layout: fixed; border-collapse: separate; border-spacing: 0; border-top: 1px solid #555; }
.c-no { width: 46px; }
.c-a { width: 72px; }
.c-b { width: 90px; }
.c-c { width: 78px; }
.grid th, .grid td { height: 16px; padding: 0 4px; font-weight: normal; text-align: left; border: solid #999; border-width: 0 1px 1px 0; overflow: hidden; white-space: nowrap; }
.grid thead th { text-align: center; background: #efefef; border-bottom: 0; border-color: #999; }
.grid .letters th { height: 15px; line-height: 13px; background: #e1e1e1; border-right-color: #555; border-bottom: 1px solid #555; box-shadow: inset 1px 1px #fff, inset -1px -1px #aaa; }
.grid .letters .corner { line-height: 13px; padding-top: 10px; vertical-align: middle; border-bottom-color: #999; }
.grid .letters .sel, .grid tbody .sel { background: #0078d7; color: #fff; box-shadow: inset 1px 1px #5ab; }
.grid .h1 th { line-height: 14px; height: 15px; }
.grid .h2 th { height: 18px; line-height: 17px; border-bottom: 1px solid #999; }
.grid tbody th { text-align: center; background: #e1e1e1; border-color: #666; box-shadow: inset 1px 1px #fff, inset -1px -1px #aaa; }
.grid .mid { text-align: center; }
.grid .num { text-align: right; }
.grid .focus { outline: 1px dotted #000; outline-offset: -1px; }
.alt td { background: #eee; }

.dialog { position: absolute; left: 502px; top: 126px; width: 535px; background: #f0f0f0; border: 1px solid #6b6b6b; box-shadow: 2px 3px 14px rgba(0,0,0,.35); font-family: "Liberation Sans", sans-serif; }
.dlg-head { height: 26px; padding: 0 10px 0 3px; background: #fff; display: flex; align-items: center; justify-content: space-between; font-family: "Open Sans", sans-serif; }
.close { width: 10px; height: 10px; display: flex; }
.dlg-body { padding: 7px 8px 9px; }
.cols { display: flex; gap: 8px; padding-bottom: 8px; border-bottom: 1px solid #a0a0a0; box-shadow: 0 1px #fff; }
.main { flex: 292; display: flex; flex-direction: column; gap: 10px; }
.side { flex: 217; display: flex; flex-direction: column; gap: 10px; }
.pair { display: grid; grid-template-columns: 1fr 1fr; gap: 8px; }
.stack { display: flex; flex-direction: column; gap: 10px; }
.box { background: #f7f7f7; border: solid #a9a4ec; border-width: 0 1px 1px 0; clip-path: polygon(0 0, calc(100% - 10px) 0, 100% 10px, 100% 100%, 0 100%); }
.box h3 { height: 16px; padding-left: 2px; background: #d9e5ff; color: #00006e; font: 11px/17px Roboto, "Liberation Sans", sans-serif; box-shadow: 0 1px #fff; }
.h45 { min-height: 45px; }
.h65 { min-height: 65px; }
.h62 { min-height: 62px; }
.h70 { min-height: 70px; }
.in { position: relative; padding: 4px 3px; }
.nr { display: block; width: 45px; height: 20px; padding-left: 4px; background: #fff; border: 1px solid #0078d7; }
.cursor { position: absolute; left: 8px; top: 7px; width: 1px; height: 14px; background: #000; }
.radios { padding: 6px 3px 0; display: flex; flex-direction: column; }
.tall { padding-top: 5px; }
.radios label { display: flex; align-items: center; gap: 3px; height: 19px; }
.radios.tall label { height: 20px; }
.radios input { appearance: none; width: 13px; height: 13px; border: 1px solid #333; border-radius: 50%; background: #fff; }
.radios input:checked { background: radial-gradient(circle, #333 0 3px, #fff 4px); }
.material { display: flex; gap: 5px; padding: 4px 3px 2px; }
.matsel { position: relative; flex: 1; min-width: 0; margin-right: -1px; }
.matsel select { display: block; width: 100%; height: 22px; padding: 0 18px 0 24px; appearance: none; border: 1px solid #7a7a7a; background: linear-gradient(#333, #333) 35px 3px / 1px 14px no-repeat, linear-gradient(#333, #333) 118px 3px / 1px 14px no-repeat, linear-gradient(45deg, transparent 43%, #333 43% 57%, transparent 57%) right 8px top 8px / 5px 5px no-repeat, linear-gradient(-45deg, transparent 43%, #333 43% 57%, transparent 57%) right 4px top 8px / 5px 5px no-repeat, #fff; }
.swatch { position: absolute; left: 4px; top: 4px; width: 13px; height: 13px; background: #6666ff; border: 1px solid #333; }
.mb { width: 25px; height: 21px; flex: none; display: flex; align-items: center; justify-content: center; background: #e1e1e1; border: 1px solid #adadad; }
.fields { display: flex; flex-direction: column; gap: 3px; }
.params { gap: 32px; }
.field { display: grid; grid-template-columns: 21px 80px 1fr; align-items: center; }
.field > span:last-child { padding-left: 4px; }
.spin { display: grid; grid-template-columns: 1fr 16px; grid-template-rows: 9px 9px; height: 20px; background: #fff; border: 1px solid #7a7a7a; border-right-color: #adadad; }
.spin input { grid-row: 1 / 3; width: 100%; min-width: 0; text-align: right; padding-right: 5px; }
.spin button { border: 1px solid #adadad; background: #f0f0f0; display: flex; align-items: center; justify-content: center; }
.up::after, .down::after { content: ""; border: 3px solid transparent; border-top: 0; border-bottom: 3px solid #000; }
.down::after { border-bottom: 0; border-top: 3px solid #000; }
.preview { height: 247px; background: #fff; border: solid #a0a0a0; border-width: 1px 0 0 1px; }
.preview svg { display: block; width: 100%; }
.actions { display: flex; justify-content: space-between; padding: 11px 1px 0; }
.apply { width: 73px; height: 21px; background: #e1e1e1; border: 2px solid #0078d7; }
```
